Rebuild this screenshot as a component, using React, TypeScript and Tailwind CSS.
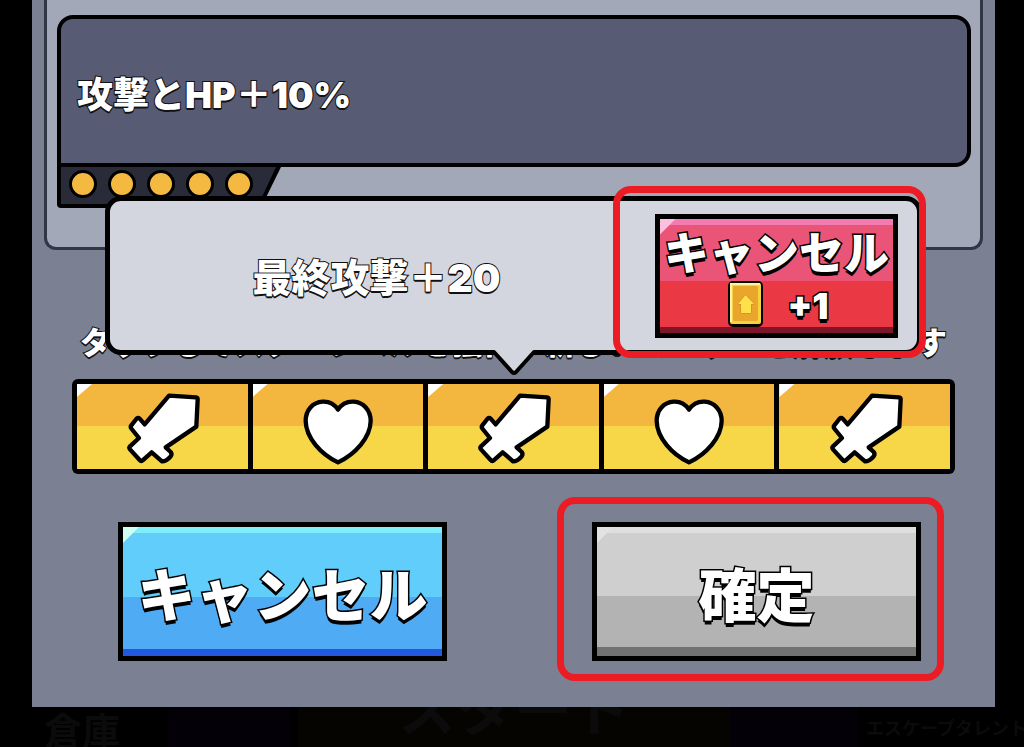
import type { ReactNode } from 'react'
import clsx from 'clsx'

type SlotKind = 'attack' | 'hp'

const SLOTS: SlotKind[] = ['attack', 'hp', 'attack', 'hp', 'attack']
const STARS = [1, 2, 3, 4, 5]

const OUTLINE = 'text-white [paint-order:stroke_fill]'
const OUTLINE_SM = '[-webkit-text-stroke:2px_#111] [text-shadow:0_2px_0_#111]'
const OUTLINE_LG = '[-webkit-text-stroke:3px_#000] [text-shadow:0_4px_0_#000]'

const BUTTON_COLORS = {
  blue: 'bg-[linear-gradient(to_bottom,#80eef8_6px,#60cdfa_6px_70px,#50abf5_70px_calc(100%-7px),#2458df_calc(100%-7px))]',
  gray: 'bg-[linear-gradient(to_bottom,#dfdfdf_6px,#cfcfcf_6px_69px,#b3b3b3_69px_calc(100%-9px),#727272_calc(100%-9px))]',
  red: 'bg-[linear-gradient(to_bottom,#f27cb0_6px,#ea5577_6px_62px,#ea3845_62px_calc(100%-6px),#7c1628_calc(100%-6px))]',
}

const CORNER_COLORS = {
  blue: 'bg-[#cffff0]',
  gray: 'bg-[#e2e2e2]',
  red: 'bg-[#fbbfe0]',
}

type GameButtonProps = {
  color: keyof typeof BUTTON_COLORS
  className?: string
  children: ReactNode
}

function GameButton({ color, className, children }: GameButtonProps) {
  return (
    <button
      type="button"
      className={clsx('relative w-full border-5 border-black bg-origin-padding', BUTTON_COLORS[color], OUTLINE, className)}
    >
      <span className={clsx('absolute left-0 top-0 h-4 w-4 [clip-path:polygon(0_0,100%_0,0_100%)]', CORNER_COLORS[color])} />
      {children}
    </button>
  )
}

function SlotIcon({ kind }: { kind: SlotKind }) {
  const common = { fill: '#fff', stroke: '#000', strokeWidth: 13, strokeLinejoin: 'round' as const }

  if (kind === 'hp') {
    return (
      <svg viewBox="715 239 234 222" className="h-[74px] w-[78px]" overflow="visible" aria-hidden="true">
        <path
          d="M832 298C819 278 802 273 786 274C756 276 735 299 735 332C736 382 780 431 832 456C884 431 929 382 930 332C930 299 908 276 879 274C862 273 845 278 832 298Z"
          {...common}
        />
      </svg>
    )
  }

  return (
    <svg viewBox="187 239 234 222" className="h-[74px] w-[78px]" overflow="visible" aria-hidden="true">
      <path
        d="M325 256L406 261Q411 262 411 267L407 349L315 411L330 425Q335 431 330 438Q318 453 304 453L273 426L246 450Q241 454 237 449L208 417Q204 412 208 408L235 383L213 356Q208 350 212 345L227 326Q232 320 237 325L252 342Z"
        {...common}
      />
    </svg>
  )
}

function TicketIcon() {
  return (
    <svg viewBox="0 0 35 46" className="h-[46px] w-[35px]" aria-hidden="true">
      <rect x="0" y="0" width="35" height="46" rx="5" fill="#080401" />
      <rect x="2" y="2" width="31" height="41" rx="2" fill="#f8d141" />
      <path d="M3 41V3H32" fill="none" stroke="#fff3a0" strokeWidth="2" />
      <rect x="6" y="6" width="23" height="33" fill="#e9a52c" stroke="#c9861c" />
      <path d="M17.5 14L26 23H23V32H13V23H10Z" fill="#ffe14a" stroke="#c9861c" strokeLinejoin="round" />
    </svg>
  )
}

function SkillCard() {
  return (
    <section className="mx-3 rounded-b-xl border-3 border-t-0 border-[#303644] bg-[#a2a8b8] pb-[39px] pl-[10px] pr-[9px] pt-[15px]">
      <div className="flex h-[152px] items-center rounded-2xl rounded-bl-none border-4 border-black bg-[#575b74] px-4">
        <p className={clsx('pt-2 text-4xl leading-10', OUTLINE, OUTLINE_SM)}>攻撃とHP＋10%</p>
      </div>
      <div className="h-[41px] w-56 rounded-bl-sm bg-black pb-1 pl-1 pr-[5px] [clip-path:polygon(0_0,100%_0,91%_100%,0_100%)]">
        <div className="flex h-full gap-[11px] bg-[#2a2b39] pl-2 pt-[3px] [clip-path:polygon(0_0,100%_0,92%_100%,0_100%)]">
          {STARS.map((star) => (
            <span key={star} className="h-7 w-7 rounded-full border-3 border-black bg-[#f4b941]" />
          ))}
        </div>
      </div>
    </section>
  )
}

function RedFrame({ className }: { className: string }) {
  return <div className={clsx('pointer-events-none absolute rounded-[18px] border-7 border-[#ec1c24]', className)} />
}

function SlotPopup() {
  return (
    <div className="absolute inset-x-[33px] bottom-full mb-6 flex h-[159px] items-center rounded-2xl border-5 border-black bg-[#d4d6df] pr-[19px]">
      <p className={clsx('flex-1 pr-3 pt-1 text-center text-[39px] leading-none', OUTLINE, OUTLINE_SM)}>最終攻撃＋20</p>
      <div className="relative w-[243px]">
        <GameButton color="red" className="flex h-[124px] flex-col items-center">
          <span className={clsx('pt-2 text-[45px] leading-[54px]', OUTLINE_LG)}>キャンセル</span>
          <span className="flex items-center gap-6 pl-1">
            <TicketIcon />
            <span className={clsx('pt-1 text-4xl leading-none', OUTLINE_LG)}>+1</span>
          </span>
        </GameButton>
        <RedFrame className="-bottom-5 -left-[42px] -right-7 -top-7" />
      </div>
      <svg viewBox="0 0 44 26" className="absolute left-1/2 top-full h-[26px] w-11 -translate-x-1/2" aria-hidden="true">
        <path d="M0 0H44V2L42 3L23 22Q22 23 21 22L2 3L0 2Z" fill="#d4d6df" />
        <path d="M0 2H2L20 22Q22 24 24 22L42 2H44" fill="none" stroke="#000" strokeWidth="4" strokeLinejoin="round" />
      </svg>
    </div>
  )
}

function SlotRow() {
  return (
    <div className="relative mx-10 mt-4">
      <div className="flex h-[95px] gap-[5px] rounded-md bg-black p-[5px]">
        {SLOTS.map((kind, i) => (
          <button
            key={i}
            type="button"
            aria-label={kind === 'attack' ? '攻撃' : 'HP'}
            className="relative flex flex-1 items-center justify-center bg-[linear-gradient(to_bottom,#f3b63f_49%,#f7d748_49%)]"
          >
            <span className="absolute left-0 top-0 h-[13px] w-[15px] bg-white [clip-path:polygon(0_0,100%_0,0_100%)]" />
            <SlotIcon kind={kind} />
          </button>
        ))}
      </div>
      <SlotPopup />
    </div>
  )
}

// Home screen that shows through the dark backdrop
function DimmedFooter() {
  return (
    <footer className="flex h-10 overflow-hidden bg-black font-bold text-[#0b0b0b]">
      <div className="w-[168px] whitespace-nowrap pl-11 pt-1 text-[38px] leading-10">倉庫</div>
      <div className="mr-2 w-[122px] bg-[#030107]" />
      <div className="flex flex-1 items-end justify-center bg-[#050400] pb-2 text-[58px] leading-none">スタート</div>
      <div className="w-[128px] bg-[#030107]" />
      <div className="w-[166px] whitespace-nowrap pl-2 pt-2 text-lg">エスケープタレント</div>
    </footer>
  )
}

export default function App() {
  return (
    <div className="min-h-screen bg-black font-[Inter,'Noto_Sans_CJK_JP',sans-serif] font-black">
      <main className="ml-8 mr-[29px] bg-[#7b8093] pb-[46px]">
        <SkillCard />
        <p className={clsx('mt-[73px] whitespace-nowrap text-center text-[31px] leading-10', OUTLINE, OUTLINE_SM)}>
          タップしてスターレベルを強化、新しいスロットを解放します
        </p>
        <SlotRow />
        <div className="mt-12 flex gap-[145px] pl-[86px] pr-[74px]">
          <div className="flex-1">
            <GameButton color="blue" className={clsx('h-[139px] whitespace-nowrap pt-2 text-[58px] leading-none', OUTLINE_LG)}>
              キャンセル
            </GameButton>
          </div>
          <div className="relative flex-1">
            <GameButton color="gray" className={clsx('h-[139px] whitespace-nowrap pt-2 text-[58px] leading-none', OUTLINE_LG)}>
              確定
            </GameButton>
            <RedFrame className="-bottom-5 -left-[35px] -right-[23px] -top-[25px]" />
          </div>
        </div>
      </main>
      <DimmedFooter />
    </div>
  )
}
